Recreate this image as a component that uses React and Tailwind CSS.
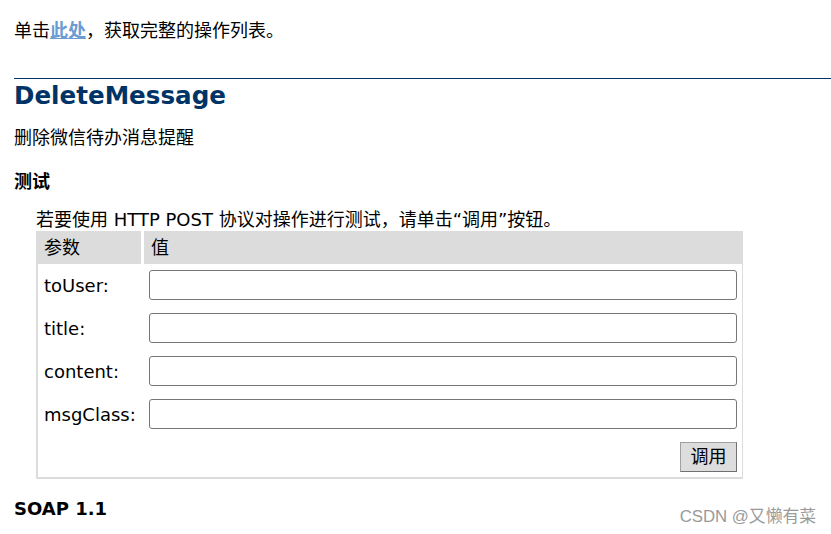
export default function App() {
  const font = { fontFamily: '"DejaVu Sans", "Noto Sans CJK SC", sans-serif' };
  const rows = ["toUser:", "title:", "content:", "msgClass:"];
  return (
    <div className="relative w-[831px] h-[534px] overflow-hidden bg-white text-black text-[18px]" style={font}>
      <div className="pl-[14px]">
        <p className="mt-[19px] leading-[24px]">
          单击<a className="font-bold underline text-[#6b9bd2]" href="#">此处</a>，获取完整的操作列表。
        </p>
        <div className="mt-[35px] h-px bg-[#003366]" />
        <h2 className="mt-[2px] leading-[30px] text-[24.6px] font-bold text-[#003366]">DeleteMessage</h2>
        <p className="mt-[15px] leading-[24px]">删除微信待办消息提醒</p>
        <h3 className="mt-[20px] leading-[24px] font-bold">测试</h3>
        <div className="pl-[22px]">
          <p className="mt-[14px] leading-[23px]">若要使用 HTTP POST 协议对操作进行测试，请单击“调用”按钮。</p>
          <div className="w-[707px]">
            <div className="flex h-[33px] items-center">
              <div className="w-[105px] h-full bg-[#dcdcdc] pl-[8px] flex items-center">参数</div>
              <div className="ml-[3px] flex-1 h-full bg-[#dcdcdc] pl-[7px] flex items-center">值</div>
            </div>
            <div className="border-l-2 border-r border-b-2 border-[#dcdcdc] pt-[6px] pb-[5px] pr-[5px] flex flex-col gap-[13px]">
              {rows.map((r) => (
                <div key={r} className="flex items-center h-[30px]">
                  <div className="w-[111px] pl-[6px] pt-[2px] leading-[30px]">{r}</div>
                  <input className="w-[588px] h-[30px] border border-[#767676] rounded-[3px] bg-white" />
                </div>
              ))}
              <div className="flex justify-end h-[30px]">
                <button className="w-[57px] h-[30px] bg-[#dddddd] border border-[#a0a0a0] border-b-[#707070] border-r-[#707070] leading-[28px] text-[18px]">
                  调用
                </button>
              </div>
            </div>
          </div>
        </div>
        <h3 className="mt-[18px] leading-[24px] font-bold">SOAP 1.1</h3>
      </div>
      <div
        className="absolute right-[15px] top-[507px] leading-[20px] text-[16.8px] text-[#9a9a9a]"
        style={{ fontFamily: '"Liberation Sans", "Noto Sans CJK SC", sans-serif' }}
      >
        CSDN @又懒有菜
      </div>
    </div>
  );
}
